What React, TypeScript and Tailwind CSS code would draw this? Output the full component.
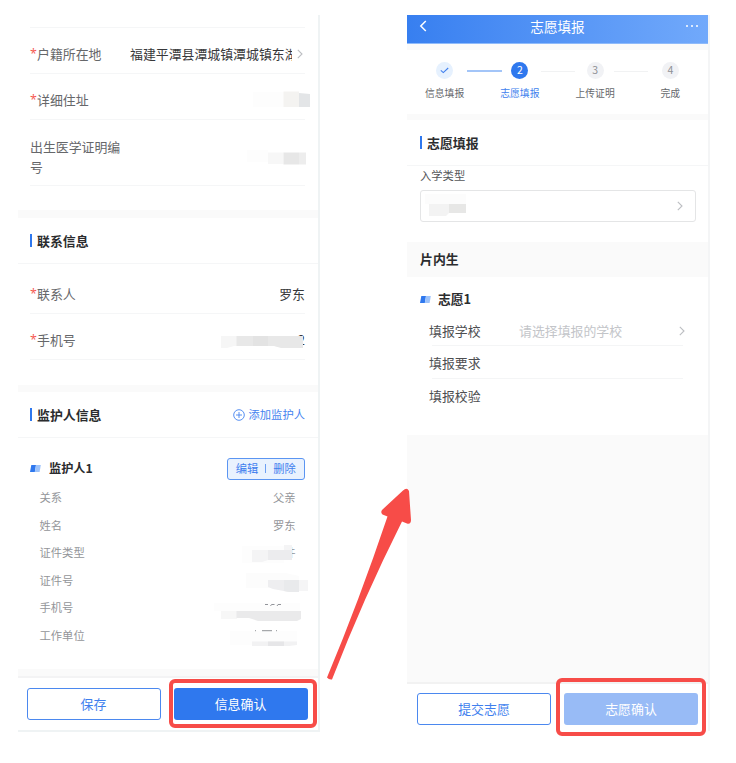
import type { ReactNode } from 'react';

function Chevron({ className = '' }: { className?: string }) {
  return (
    <svg className={className} width="6" height="10" viewBox="0 0 6 10" fill="none" stroke="#bcbec2" strokeWidth="1.1">
      <path d="M0.8 0.8 5 5 0.8 9.2" />
    </svg>
  );
}

function Slabs() {
  return (
    <svg width="11" height="7" viewBox="0 0 11 7">
      <path d="M1.3 0H6L4.8 7H0Z" fill="#2f78ee" />
      <path d="M6 0H10.8L9.6 7H4.8Z" fill="#9dc3fb" />
    </svg>
  );
}

function FormRow({ label, required = true, children, className }: { label: string; required?: boolean; children?: ReactNode; className: string }) {
  return (
    <div className={`ml-3 mr-[13px] flex shrink-0 items-center justify-between border-b border-[#f5f6f7] text-[12.9px] text-[#66676a] ${className}`}>
      <div className="flex w-[94px] leading-5">
        {required && <span className="w-[7px] shrink-0 font-['Open_Sans',sans-serif] text-[12.5px] text-[#f5564f]">*</span>}
        <span>{label}</span>
      </div>
      {children}
    </div>
  );
}

function SectionHead({ title, children, className }: { title: string; children?: ReactNode; className: string }) {
  return (
    <div className={`flex items-center border-b border-[#f5f6f7] ${className}`}>
      <span className="mr-[5px] h-[13px] w-[2px] bg-[#2f78ee]" />
      <h2 className="flex-1 text-[12.9px] font-bold leading-5 text-[#2b2c2e]">{title}</h2>
      {children}
    </div>
  );
}

function DetailRow({ label, value }: { label: string; value?: string }) {
  return (
    <div className="flex h-[27.5px] items-center justify-between pl-[21.5px] pr-[22.5px] text-[11.3px] text-[#939599]">
      <span>{label}</span>
      <span>{value}</span>
    </div>
  );
}

function Redactions() {
  return (
    <svg className="pointer-events-none absolute left-0 top-0" width="736" height="763" viewBox="0 0 736 763">
      <path d="M253 92h31v15h-31z" fill="#fdfdfd" />
      <path d="M283.500 91.500h15.500v15.500h-15.500z" fill="#f4f3f1" />
      <path d="M299 93l11 1v13h-11z" fill="#e3e5e7" />

      <path d="M247 150h21v12h-21z" fill="#fdfdfd" />
      <path d="M268 152.500h15.500V164H268z" fill="#f7f7f7" />
      <path d="M283.500 152.500H299v12h-15.500z" fill="#e7e7e7" />
      <path d="M299 152.500h7v12h-7z" fill="#ededed" />

      <path d="M221 336h82v7l-1 5h-17l-11-2h-40l-7 2h-6z" fill="#f6f6f6" />
      <path d="M236.500 336H303v12h-22l-7-2h-37.500z" fill="#e8e8e8" />
      <path d="M253 336h15v10h-15z" fill="#e3e3e3" />

      <path d="M242 546h42v17h-42z" fill="#fdfdfd" />
      <path d="M252 550h16v10l-6 2h-10z" fill="#f4f4f5" />
      <path d="M268 550h16v-5h8v15h-24z" fill="#ececee" />
      <path d="M284 545h8v5h-8z" fill="#f4f4f5" />

      <path d="M246 573h40l13 3v12h-53z" fill="#fcfcfc" />
      <path d="M268 580h31v12h-10l-16-3-5-2z" fill="#eeeef0" />
      <path d="M284 580h15v12h-10l-5-1z" fill="#e9eaec" />
      <path d="M299 580h9v11h-9z" fill="#f5f5f6" />

      <path d="M214 603h86v8h-86z" fill="#fdfdfd" />
      <path d="M221 611h16v8h-16z" fill="#f7f7f7" />
      <path d="M236.500 611H301v8l-4 2h-39l-9-3h-12.500z" fill="#eaeaeb" />
      <path d="M265 604.500h3m2.500 1.500 1-1.500h3m2.500 1.500 1-1.500h3" stroke="#92949a" fill="none" />

      <path d="M230 631h67v14h-67z" fill="#fdfdfd" />
      <path d="M252 641.500h45v3.500l-8 1h-37z" fill="#f2f2f3" />
      <path d="M268 641.500h16v4.500h-16z" fill="#e6e6e8" />
      <path d="M255 630.700h1m6 0h10m4 0h1" stroke="#929498" fill="none" />

      <path d="M425 194h41v10h-41z" fill="#fcfcfc" />
      <path d="M429 204h20v9l-3 3h-17z" fill="#f3f3f3" />
      <path d="M449 204h17v9h-17z" fill="#e7e7e6" />
    </svg>
  );
}

function InfoPanel() {
  return (
    <section className="mt-[15px] flex h-[717px] w-[302px] flex-col border-b-2 border-r-2 border-[#eff3f4] bg-white">
      <div className="ml-3 mr-[13px] h-[13px] border-b border-[#f5f6f7]" />
      <FormRow label="户籍所在地" className="h-[46px] pt-[7px]">
        <div className="flex flex-1 items-center justify-end">
          <span className="w-[162px] overflow-hidden whitespace-nowrap text-[#37383a]">福建平潭县潭城镇潭城镇东湖</span>
          <Chevron className="ml-[5px] mr-[2px]" />
        </div>
      </FormRow>
      <FormRow label="详细住址" className="h-[46px] pt-[6px]" />
      <FormRow label="出生医学证明编号" required={false} className="h-[66px] pt-[8px]" />
      <div className="mt-[24px] h-[8px] shrink-0 bg-[#fafafa]" />
      <SectionHead title="联系信息" className="h-[46px] shrink-0 pl-3 pr-[13px]" />
      <FormRow label="联系人" className="h-[50px] pt-[11px]">
        <span className="text-[#37383a]">罗东</span>
      </FormRow>
      <FormRow label="手机号" className="h-[46px] pt-[7px]">
        <span className="text-[#37383a]">2</span>
      </FormRow>
      <div className="mt-[25px] h-[7px] shrink-0 bg-[#fafafa]" />
      <SectionHead title="监护人信息" className="h-[46px] shrink-0 pl-3 pr-[13px]">
        <button className="flex items-center gap-1 text-[11.3px] text-[#4583ef]">
          <svg width="12" height="12" viewBox="0 0 12 12" fill="none" stroke="#4583ef" strokeWidth="0.9">
            <circle cx="6" cy="6" r="5.3" />
            <path d="M3 6h6M6 3v6" />
          </svg>
          添加监护人
        </button>
      </SectionHead>
      <div className="mt-[19px] flex h-[23px] shrink-0 items-center pl-3 pr-[13px]">
        <Slabs />
        <h3 className="ml-[8px] flex-1 text-[12.2px] font-bold text-[#2b2c2e]">监护人1</h3>
        <div className="flex h-[22px] w-[78.500px] items-center justify-center gap-[7px] rounded-[3px] border border-[#5b95f2] bg-[#e9f2fe] text-[11.3px] text-[#3f7fee]">
          <span>编辑</span>
          <span className="h-[9px] w-px bg-[#6c9ff3]" />
          <span>删除</span>
        </div>
      </div>
      <div className="mt-[4px] h-[165px] shrink-0">
        <DetailRow label="关系" value="父亲" />
        <DetailRow label="姓名" value="罗东" />
        <DetailRow label="证件类型" value="件" />
        <DetailRow label="证件号" />
        <DetailRow label="手机号" />
        <DetailRow label="工作单位" />
      </div>
      <div className="mt-[20px] h-[9px] shrink-0 border-b-2 border-[#f3f3f4] bg-[#fafafa]" />
      <div className="flex flex-1 gap-[13px] pl-[9px] pt-[10px]">
        <button className="h-[32px] w-[134px] rounded-[3px] border border-[#4b88ef] pr-px text-[12.9px] text-[#3f7fee]">保存</button>
        <button className="h-[32px] w-[134px] rounded-[3px] bg-[#2f78ee] pr-px text-[12.9px] text-white">信息确认</button>
      </div>
    </section>
  );
}

function Step({ label, mark, circle, text }: { label: string; mark: ReactNode; circle: string; text: string }) {
  return (
    <div className="flex w-[75.500px] flex-col items-center">
      <span className={`flex h-[17px] w-[17px] items-center justify-center rounded-full text-[10.5px] leading-none ${circle}`}>{mark}</span>
      <span className={`mt-[7.5px] text-[9.8px] leading-[15px] ${text}`}>{label}</span>
    </div>
  );
}

function ChoiceRow({ label, children, className }: { label: string; children?: ReactNode; className: string }) {
  return (
    <div className={`flex items-center pl-[22px] pr-[23px] text-[12.9px] text-[#4d4e51] ${className}`}>
      <span className="w-[90px]">{label}</span>
      {children}
    </div>
  );
}

function ChoicePanel() {
  return (
    <section className="mt-[15px] flex h-[716px] w-[303px] flex-col border-r-2 border-[#f4f5f6] bg-white">
      <header className="flex h-[29px] shrink-0 items-start border-b border-[#8ebafa] bg-linear-to-r from-[#377ff0] to-[#71a9fb] pl-[12px] pr-[10px] text-white">
        <svg className="mt-[5px]" width="8" height="12" viewBox="0 0 8 12" fill="none" stroke="white" strokeWidth="1.5">
          <path d="M6.800 1 1.800 6l5 5" />
        </svg>
        <h1 className="flex-1 pl-[2px] text-center text-[13.6px] leading-[22px]">志愿填报</h1>
        <span className="mt-[10px] flex gap-[3px]">
          <i className="h-[2px] w-[2px] rounded-full bg-white" />
          <i className="h-[2px] w-[2px] rounded-full bg-white" />
          <i className="h-[2px] w-[2px] rounded-full bg-white" />
        </span>
      </header>
      <div className="h-[6px] shrink-0 bg-[#fafafa]" />
      <div className="relative flex h-[64px] shrink-0 pt-[11.5px]">
        <Step
          label="信息填报"
          circle="bg-[#e6f1fe]"
          text="text-[#66686c]"
          mark={
            <svg width="9" height="7" viewBox="0 0 9 7" fill="none" stroke="#3f7fee" strokeWidth="1.100">
              <path d="M0.800 3.300 3.300 5.600 8.200 1" />
            </svg>
          }
        />
        <Step label="志愿填报" circle="bg-[#2f78ee] text-white" text="text-[#3f7fee]" mark="2" />
        <Step label="上传证明" circle="bg-[#f1f2f5] text-[#8e9094]" text="text-[#66686c]" mark="3" />
        <Step label="完成" circle="bg-[#f1f2f5] text-[#8e9094]" text="text-[#66686c]" mark="4" />
        <span className="absolute left-[60px] top-[20px] h-[2px] w-[35px] bg-[#a3c5f8]" />
        <span className="absolute left-[134px] top-[21px] h-px w-[34px] bg-[#f1f2f3]" />
        <span className="absolute left-[207px] top-[21px] h-px w-[34px] bg-[#f1f2f3]" />
      </div>
      <div className="h-[6px] shrink-0 bg-[#fafafa]" />
      <SectionHead title="志愿填报" className="h-[46px] shrink-0 pl-[13px] pr-3" />
      <div className="h-[76px] shrink-0 px-[13px]">
        <p className="text-[11.3px] leading-[18px] text-[#55575a]">入学类型</p>
        <div className="mt-[6px] flex h-[32px] w-[276px] items-center justify-end rounded-[3px] border border-[#e4e5e6] pr-[12px]">
          <Chevron />
        </div>
      </div>
      <h2 className="h-[35px] shrink-0 bg-[#fafafa] pl-[13px] text-[12.9px] font-bold leading-[34px] text-[#2b2c2e]">片内生</h2>
      <div className="h-[158px] shrink-0 pt-[12px]">
        <div className="flex h-5 items-center pl-[13px]">
          <Slabs />
          <h3 className="ml-[7px] text-[12.8px] font-bold text-[#2b2c2e]">志愿1</h3>
        </div>
        <ChoiceRow label="填报学校" className="mt-[7px] h-[29px]">
          <span className="flex-1 text-[#c3c5c9]">请选择填报的学校</span>
          <Chevron />
        </ChoiceRow>
        <div className="ml-[25px] mr-[25px] h-px bg-[#f4f5f6]" />
        <ChoiceRow label="填报要求" className="h-[32px] pt-[2px]" />
        <div className="ml-[25px] mr-[25px] h-px bg-[#f4f5f6]" />
        <ChoiceRow label="填报校验" className="h-[33px]" />
      </div>
      <div className="h-[249px] shrink-0 border-b-2 border-[#f2f2f2] bg-[#fafafa]" />
      <div className="flex flex-1 gap-[13px] pl-[10px] pt-[9px]">
        <button className="h-[32px] w-[134px] rounded-[3px] border border-[#4b88ef] text-[12.9px] text-[#3f7fee]">提交志愿</button>
        <button className="h-[32px] w-[134px] rounded-[3px] bg-[#98bbf6] text-[12.9px] text-white">志愿确认</button>
      </div>
    </section>
  );
}

export default function App() {
  return (
    <main className="relative flex h-[763px] w-[736px] gap-[87px] overflow-hidden bg-white pl-[18px] font-['Noto_Sans_CJK_SC',sans-serif]">
      <InfoPanel />
      <ChoicePanel />
      <Redactions />
      <span className="absolute left-[169px] top-[679px] h-[49px] w-[148px] rounded-[6px] border-4 border-[#f74c48]" />
      <span className="absolute left-[556px] top-[678px] h-[58px] w-[150px] rounded-[6px] border-4 border-[#f74c48]" />
      <svg className="absolute left-[320px] top-[480px]" width="100" height="210" viewBox="320 480 100 210">
        <path
          d="M327 677.500Q359 601 387.500 516.500L382.500 514.500Q380 512 382.500 509.500L403 490.500Q407 487 409 491L411 520Q411 524.500 407 523.500L402 521.500Q364 597 332 679.500Q329 680 327 677.500Z"
          fill="#f74c48"
        />
      </svg>
    </main>
  );
}
